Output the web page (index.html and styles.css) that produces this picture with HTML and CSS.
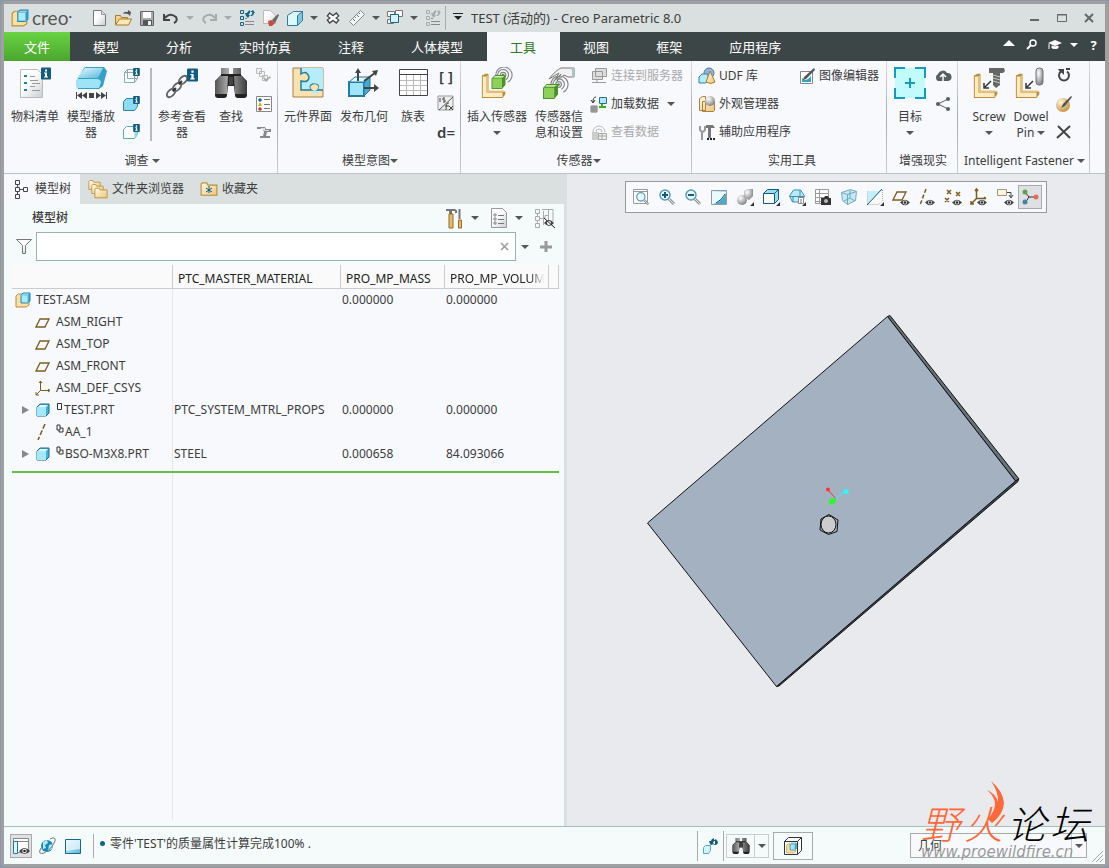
FILE: index.html
```
<!DOCTYPE html>
<html lang="zh-CN">
<head>
    <meta charset="utf-8">
    <title>TEST (活动的) - Creo Parametric 8.0</title>
    <link rel="stylesheet" href="styles.css">
</head>
<body>
<!-- 公用图标 -->
<svg class="defs" aria-hidden="true">
    <linearGradient id="gBlue" x1="0" y1="0" x2="1" y2="1"><stop offset="0" stop-color="#e9fbff"/><stop offset="1" stop-color="#55b8dc"/></linearGradient>
    <linearGradient id="gGrey" x1="0" y1="0" x2="1" y2="0"><stop offset="0" stop-color="#555"/><stop offset=".4" stop-color="#aaa"/><stop offset="1" stop-color="#3b3b3b"/></linearGradient>
    <linearGradient id="gPaper" x1="0" y1="0" x2="1" y2="1"><stop offset=".4" stop-color="#fff"/><stop offset="1" stop-color="#c9ced1"/></linearGradient>
    <linearGradient id="gTan" x1="0" y1="0" x2="1" y2="1"><stop offset="0" stop-color="#fffbe8"/><stop offset="1" stop-color="#eec47a"/></linearGradient>
    <radialGradient id="gBall" cx=".35" cy=".3" r=".8"><stop offset="0" stop-color="#fff6dc"/><stop offset="1" stop-color="#c08a32"/></radialGradient>
    <radialGradient id="gSteel" cx=".35" cy=".3" r=".8"><stop offset="0" stop-color="#fff"/><stop offset="1" stop-color="#777"/></radialGradient>

    <symbol id="i-info" viewBox="0 0 10 12"><rect width="10" height="12" rx="1" fill="#125c80"/><path d="M4 2h2v2H4zM3 5h3v4h1v1H3V9h1V6H3z" fill="#fff"/></symbol>
    <symbol id="i-asm" viewBox="0 0 16 16"><path d="M1 4l2-2h4v8h7v3l-3 2H1z" fill="#fbe0a5" stroke="#b98d3c"/><path d="M6 3l2-2h7v8l-2 2H6z" fill="#a8e9fb" stroke="#2287b0"/><path d="M13 3l2-2v8l-2 2z" fill="#2f94c4"/><path d="M6 3h7v8" fill="none" stroke="#67c1e2"/></symbol>
    <symbol id="i-part" viewBox="0 0 16 16"><path d="M2 5l3-3h9v9l-3 3H2z" fill="#3fb4e4" stroke="#1d6a8f"/><path d="M2 5h9v9H2z" fill="#a5e9ff"/><path d="M3 5l2-2h8l-2 2z" fill="#e4faff"/></symbol>
    <symbol id="i-plane" viewBox="0 0 16 12"><path d="M5 2h9l-4 8H1z" fill="none" stroke="#7d5c22" stroke-width="1.300"/></symbol>
    <symbol id="i-eye" viewBox="0 0 10 7"><path d="M0 3.500Q5-2 10 3.500Q5 9 0 3.500z" fill="#444"/><circle cx="5" cy="3.500" r="2" fill="#fff"/><circle cx="5" cy="3.500" r="1.200" fill="#222"/></symbol>
    <symbol id="i-L" viewBox="0 0 32 32"><path d="M2 8l4-2h3v19h18v3l-3 4H2z" fill="#b98d3c"/><path d="M3 9h4v17h17v5H3z" fill="#fdebc3"/><path d="M7 9l2-2v18l-2 1zM7 26l3-2h16l-2 2z" fill="#e7c079"/></symbol>
    <symbol id="i-waves" viewBox="0 0 20 20"><g fill="none" stroke="#888" stroke-width="1.300"><circle cx="9" cy="9" r="3"/><path d="M4 12A6 6 0 1 1 12 14M1 10A9 9 0 1 1 14 17"/></g><circle cx="9" cy="9" r="1.500" fill="#4a9a2f"/></symbol>
    <symbol id="i-green" viewBox="0 0 16 16"><path d="M0 4l4-4h12v11l-4 5H0z" fill="#4d8f2c"/><path d="M1 4h11v11H1z" fill="#8fd05a"/><path d="M2 3l2-2h11l-3 2z" fill="#c5eea0"/></symbol>
    <symbol id="i-binoc" viewBox="0 0 34 32"><path d="M7 1h8v6h4V1h8v7l6 6v14q0 3-3 3h-6q-3 0-3-3l-1-9h-6l-1 9q0 3-3 3H4q-3 0-3-3V14l6-6z" fill="#222"/><path d="M7 1h8v6H7zM19 1h8v6h-8zM6 9h8l-1 18H1V15zM20 9h8l5 6v12H21z" fill="url(#gGrey)"/><path d="M15 10h4v8h-4z" fill="#444"/></symbol>
    <symbol id="i-folder" viewBox="0 0 16 13"><path d="M1 3V2l1-1h4l1 2h8v9H1z" fill="url(#gTan)" stroke="#b98d3c"/></symbol>
    <symbol id="i-regen" viewBox="0 0 16 18"><g fill="none" stroke="currentColor" stroke-width="1"><path d="M1.500 1.500h3v3h-3zM1.500 7.500h3v3h-3zM1.500 13.500h3v3h-3z"/></g><path d="M6 9h2v1H6zM9 12h6v1H6v-1zM6 15h9v1H6z" fill="#888"/><path d="M7 7l-1-3h2q1-2 3-3v3q-2 1-1 2h1L9 9zM15 4h1L14 1 11 3h2q1 2-2 4h2q2-1 2-3z" fill="currentColor"/></symbol>
    <symbol id="i-loupe" viewBox="0 0 18 18"><path d="M11 11l5 5" stroke="#999" stroke-width="3"/><path d="M11 11l5 5" stroke="#ddd"/><circle cx="7" cy="7" r="5" fill="#e6f8fe" stroke="#5d9bb5" stroke-width="1.500"/></symbol>
    <symbol id="i-comp" viewBox="0 0 8 9"><path d="M1 1h3v5H1zM4 4h3v4H3V6" fill="none" stroke="#333"/></symbol>
</svg>

<div class="window">
    <header class="titlebar">
        <div class="brand">
            <svg width="18" height="18"><use href="#i-asm"/></svg><span>creo<sup>•</sup></span>
        </div>
        <div class="quick-access">
            <button aria-label="新建"><svg width="16" height="18"><path d="M2.500 1.500h8l4 4v11h-12z" fill="url(#gPaper)" stroke="#777"/><path d="M10.500 1.500v4h4" fill="#ddd" stroke="#999"/></svg></button>
            <button aria-label="打开"><svg width="18" height="18"><path d="M1.500 15.500v-9h5l1 2h6v2" fill="#f3d28d" stroke="#a37b33"/><path d="M1.500 16l4-6h12l-3 6z" fill="#ffe7b3" stroke="#a37b33"/><path d="M9 5q1-3 5-2V1l3 2-1 4-2-2q-3-1-5 0z" fill="#555"/></svg></button>
            <button aria-label="保存"><svg width="16" height="18"><path d="M1.500 2.500h13v14h-13z" fill="#aaa" stroke="#666"/><path d="M4 3h8v6H4z" fill="#fff"/><path d="M4 11h9v5H4z" fill="#555"/><path d="M9 12h3v4H9z" fill="#e5f5fb"/></svg></button>
            <button aria-label="撤消"><svg width="18" height="18"><path d="M3 9q5-6 11-1 2 4-2 6M2 5v6h6" fill="none" stroke="#444" stroke-width="2"/></svg></button>
            <button class="drop" aria-label="撤消列表"><i class="caret pale"></i></button>
            <button aria-label="重做"><svg width="18" height="18"><path d="M15 9q-5-6-11-1-2 4 2 6M16 5v6h-6" fill="none" stroke="#aaa" stroke-width="2"/></svg></button>
            <button class="drop" aria-label="重做列表"><i class="caret pale"></i></button>
            <button class="teal" aria-label="重新生成"><svg width="16" height="18"><use href="#i-regen"/></svg></button>
            <button aria-label="拭除"><svg width="18" height="18"><path d="M1.500 1.500h7l5 5v8h-12z" fill="url(#gPaper)" stroke="#bbb"/><path d="M6 12l4-1 3 3-3 3H7z" fill="#c94c3f"/><path d="M10 11l6-6 1 1-4 8z" fill="#666"/></svg></button>
            <button aria-label="窗口显示"><svg width="18" height="18"><path d="M1.500 6.500l6-4h9v9l-5 5h-10z" fill="#dff7ff" stroke="#2d7f9d"/><path d="M11.500 6.500l5-4v9l-5 5z" fill="#7cc6e0" stroke="#2d7f9d"/></svg></button>
            <button class="drop" aria-label="窗口选项"><i class="caret"></i></button>
            <button aria-label="关闭窗口"><svg width="14" height="14"><path d="M2 3l10 8M12 3L2 11" stroke="#444" stroke-width="5"/><path d="M3 4l8 6M11 4l-8 6" stroke="#fff" stroke-width="2.500"/></svg></button>
            <button aria-label="测量"><svg width="18" height="18"><path d="M1.500 12.500l11-11 4 4-11 11z" fill="#eef7fb" stroke="#888"/><path d="M5 10l2 2M7 8l1 1M9 6l2 2M11 4l1 1" stroke="#666"/></svg></button>
            <button class="drop" aria-label="测量选项"><i class="caret"></i></button>
            <button aria-label="窗口"><svg width="18" height="18"><path d="M1.500 2.500h7v5h-7zM1.500 10.500h6v4h-6zM9.500 1.500h7v6h-7z" fill="#fff" stroke="#777"/><path d="M4.500 5.500h8v8h-8z" fill="#d6f4fd" stroke="#16698c"/></svg></button>
            <button class="drop" aria-label="窗口列表"><i class="caret"></i></button>
            <button class="grey" aria-label="定制重新生成"><svg width="16" height="18"><use href="#i-regen"/></svg></button>
            <button class="customize" aria-label="自定义"><i class="caret dark"></i></button>
        </div>
        <h1>TEST (活动的) - Creo Parametric 8.0</h1>
        <div class="window-controls">
            <button aria-label="最小化"><svg width="12" height="12"><path d="M1 8h9" stroke="#666" stroke-width="2"/></svg></button>
            <button aria-label="最大化"><svg width="12" height="12"><path d="M1.500 2.500h9v7h-9zM1 3h10" fill="none" stroke="#666"/></svg></button>
            <button aria-label="关闭"><svg width="12" height="12"><path d="M2 2l8 8M10 2l-8 8" stroke="#666" stroke-width="2"/></svg></button>
        </div>
    </header>

    <nav class="tabs">
        <button class="file">文件</button>
        <button>模型</button>
        <button>分析</button>
        <button>实时仿真</button>
        <button>注释</button>
        <button>人体模型</button>
        <button class="active">工具</button>
        <button>视图</button>
        <button>框架</button>
        <button>应用程序</button>
        <div class="tab-tools">
            <button aria-label="最小化功能区"><svg width="12" height="12"><path d="M0 7l6-6 6 6z" fill="#fff"/></svg></button>
            <button aria-label="搜索"><svg width="12" height="12"><circle cx="7" cy="4" r="3" fill="none" stroke="#fff" stroke-width="1.500"/><path d="M5 6l-4 4" stroke="#fff" stroke-width="2"/></svg></button>
            <button aria-label="学习"><svg width="14" height="12"><path d="M0 4l7-3 7 3-7 3z" fill="#fff"/><path d="M4 7v2q3 1 6 0V7L7 8zM1 5v5" fill="#fff" stroke="#fff"/></svg></button>
            <button class="narrow" aria-label="学习选项"><i class="caret white"></i></button>
            <button class="help" aria-label="帮助">?</button>
        </div>
    </nav>

    <div class="ribbon">
        <section class="group g-investigate">
            <div class="tools">
                <button class="big"><svg width="32" height="32"><path d="M1.500 2.500h17l5 5v23h-22z" fill="url(#gPaper)" stroke="#bbb"/><path d="M5 8h3v2H5zM5 15h3v2H5zM5 22h3v2H5z" fill="#1583ac"/><path d="M11 9.500h5M11 13.500h8M13 16.500h8M11 19.500h5M13 23.500h8" stroke="#999"/><use href="#i-info" x="22" y="0" width="10" height="13"/></svg><span>物料清单</span></button>
                <button class="big"><svg width="32" height="32"><path d="M1 15L9 1q1-1 2-1h18l3 4-4 15-4 3H3z" fill="#37a0c8"/><path d="M1 14q0-2 2-2h20q3 1 3 3l-2 6H3q-2 0-2-3z" fill="#9fe3f8"/><path d="M2 11l8-10h18l-5 10z" fill="url(#gBlue)"/><path d="M1 25h1v7H1zM7 25v7l-5-3.500zM12 25v7l-5-3.500zM21 25v7l5-3.500zM26 25v7l5-3.500zM31 25h1v7h-1zM14 26h5v5h-5z" fill="#444"/></svg><span>模型播放器</span></button>
                <div class="stack">
                    <button aria-label="特征信息"><svg width="18" height="18"><path d="M2.500 5.500l3-3h10v9l-3 4h-10zM2.500 5.500h10v10M5.500 2.500v9h10" fill="#f7fcff" stroke="#8ba9b6"/><use href="#i-info" x="11" y="1" width="7" height="8"/></svg></button>
                    <button aria-label="模型信息"><svg width="18" height="18"><path d="M1.500 6.500l3-3h11v8l-3 4h-11z" fill="#8edbf4" stroke="#2a86a9"/><use href="#i-info" x="11" y="1" width="7" height="8"/></svg></button>
                    <button aria-label="元件信息"><svg width="18" height="18"><path d="M1.500 6.500l3-3h11v8l-3 4h-11z" fill="#fff" stroke="#58abc9"/><path d="M12.500 6.500l3-2v7l-3 4z" fill="#8edbf4"/><use href="#i-info" x="11" y="1" width="7" height="8"/></svg></button>
                </div>
                <div class="divider"></div>
                <button class="big"><svg width="34" height="32"><g fill="none" stroke="#666" stroke-width="2"><ellipse cx="6" cy="26" rx="5" ry="3" transform="rotate(-45 6 26)"/><ellipse cx="12" cy="20" rx="5" ry="3" transform="rotate(-45 12 20)"/><ellipse cx="18" cy="13" rx="5" ry="3" transform="rotate(-45 18 13)"/></g><path d="M8 24l3-3M14 17l3-3" stroke="#333" stroke-width="2"/><use href="#i-info" x="22" y="1" width="11" height="14"/></svg><span>参考查看器</span></button>
                <button class="big find"><svg width="34" height="32"><use href="#i-binoc"/></svg><span>查找</span></button>
                <div class="stack">
                    <button aria-label="选择"><svg width="18" height="18"><path d="M1.500 1.500h5v5h-5zM4.500 4.500h5v5h-5zM7.500 8.500h5v5h-5z" fill="#f4f4f4" stroke="#bbb"/><path d="M8 11l3 4 5-5-1-1-4 3-2-2z" fill="#aaa"/></svg></button>
                    <button aria-label="消息日志"><svg width="18" height="18"><path d="M1.500 1.500h15v15h-15z" fill="#fff" stroke="#888"/><circle cx="5" cy="5" r="1.800" fill="#166c91"/><path d="M3 11l2-4 2 4z" fill="#e8a91c"/><circle cx="5" cy="14" r="1.800" fill="#c6392b"/><path d="M9 4.500h6M9 9.500h6M9 13.500h6" stroke="#777"/></svg></button>
                    <button aria-label="进程"><svg width="18" height="18"><path d="M2 4h8l1 2h5v3h-4l-1 4h4v2H5v-2h3l1-4-1-3H2z" fill="#888"/><path d="M5 5h5v2h4v1h-4z" fill="#ddd"/></svg></button>
                </div>
            </div>
            <h2>调查 <i class="caret"></i></h2>
        </section>

        <section class="group g-intent">
            <div class="tools">
                <button class="big"><svg width="32" height="32"><path d="M1 1h30v29H1z" fill="#fae2af" stroke="#a68145"/><path d="M9 1h22v22h-5q2 3-2 4-5 0-3-4H9z" fill="#b5edfc"/><path d="M9 8q1-3 5-3 3 2 3 5t-3 5q-4 0-5-3z" fill="#fae2af"/><path d="M9 1v6q6-4 8 3 0 6-8 4v9h11q-4-4 1-6 8 0 4 6h6" fill="#fae2af" fill-opacity="0" stroke="#247b9e" stroke-width="1.500"/><path d="M20 23q-4-4 2-6 7 1 3 6z" fill="#fae2af"/></svg><span>元件界面</span></button>
                <button class="big"><svg width="34" height="32"><path d="M2 15h15v14H2z" fill="#9fe5fb" stroke="#247b9e" stroke-width="2"/><path d="M2 15l6-5h15l-6 5z" fill="#e3f9ff" stroke="#247b9e"/><path d="M17 15l6-5v13l-6 6z" fill="#42a9d0" stroke="#247b9e"/><path d="M11 14V3M17 14l11-8M17 21h13" stroke="#444" stroke-width="2"/><path d="M8 6l3-5 3 5zM25 4l6-1-2 6zM27 17l5 4-5 4z" fill="#444"/></svg><span>发布几何</span></button>
                <button class="big find"><svg width="32" height="32"><path d="M2.500 2.500h28v26h-28z" fill="#fff"/><path d="M9.500 8v20M16.500 8v20M23.500 8v20M2 13.500h28M2 18.500h28M2 23.500h28" stroke="#bbb"/><path d="M2.500 2.500h28v26h-28zM2 7.500h28" fill="none" stroke="#444"/></svg><span>族表</span></button>
                <div class="stack">
                    <button class="sym">[ ]</button>
                    <button aria-label="参数"><svg width="18" height="18"><path d="M1 1h15v14H1z" fill="#eee" stroke="#999"/><path d="M2 15L16 2" stroke="#555"/><path d="M3 3v4M8 3H6v2h2v2H6M12 8q-3-1-3 7M8 11h4M12 11l4 4M16 11l-4 4" fill="none" stroke="#444"/></svg></button>
                    <button class="sym">d=</button>
                </div>
            </div>
            <h2>模型意图<i class="caret"></i></h2>
        </section>

        <section class="group g-sensor">
            <div class="tools">
                <button class="big wide"><svg width="34" height="32"><use href="#i-L" width="30" height="32"/><use href="#i-waves" x="15" y="0" width="18" height="18"/><use href="#i-green" x="11" y="8" width="15" height="14"/></svg><span>插入传感器</span><i class="caret"></i></button>
                <button class="big wide"><svg width="34" height="32"><path d="M7 12Q14 3 19 1h13v9h-6l-4-2-7 6 4-7-6 6 4-7z" fill="#f2f2f2" stroke="#777"/><path d="M27 1h5v10h-2V3z" fill="#a9c3cf"/><use href="#i-waves" x="8" y="9" width="19" height="19"/><use href="#i-green" x="1" y="17" width="15" height="15"/></svg><span>传感器信息和设置</span></button>
                <div class="stack">
                    <button class="row" disabled><svg width="18" height="18"><path d="M5.500 1.500h11v8h-11zM2.500 4.500h10v8h-10zM2 15.500h14M7 13v2" fill="#ddd" stroke="#999"/></svg>连接到服务器</button>
                    <button class="row"><svg width="18" height="18"><path d="M9.500 2.500h7v6h-7z" fill="#abe9fc" stroke="#28718e"/><path d="M1 11h6v6H1zM1 13h6M1 15h6M3 11v6M5 11v6" fill="none" stroke="#777"/><path d="M6 2Q3 2 3 7M1 5l2 3 2-3" fill="none" stroke="#333"/><path d="M9 12h7M12 9v2" stroke="#3bb01b" stroke-width="2"/></svg>加载数据 <i class="caret"></i></button>
                    <button class="row" disabled><svg width="18" height="18"><path d="M3 9a6 6 0 0 1 12 0M6 9a3 3 0 0 1 6 0" fill="none" stroke="#bbb"/><path d="M2 9h7v8H2z" fill="#ccc"/><path d="M8.500 10.500h8v6h-8zM9 13h8M12 11v6" fill="#eee" stroke="#aaa"/></svg>查看数据</button>
                </div>
            </div>
            <h2>传感器<i class="caret"></i></h2>
        </section>

        <section class="group g-utility">
            <div class="tools">
                <div class="stack first">
                    <button class="row"><svg width="18" height="18"><circle cx="11" cy="6" r="5" fill="#90b5e3" stroke="#5278a8"/><path d="M1 10l3-3h6v7l-2 2H1z" fill="#b8ebf9" stroke="#3184a2"/><path d="M12 4l5 11q-4 3-9 0z" fill="url(#gTan)" stroke="#a97a2c"/></svg>UDF 库</button>
                    <button class="row"><svg width="18" height="18"><path d="M1.500 3.500l3-2h3v14h-6zM4.500 6.500h12v9l-1 1h-11z" fill="url(#gTan)" stroke="#a98144"/><circle cx="12" cy="6" r="5" fill="url(#gSteel)"/></svg>外观管理器</button>
                    <button class="row"><svg width="18" height="18"><path d="M2 3v4l2 2v8M7 3v4L5 9" fill="none" stroke="#999" stroke-width="2"/><path d="M8 2h7l2 3h-4v10h-3V5H8z" fill="#777"/><path d="M9 16h8" stroke="#222" stroke-width="2" stroke-dasharray="2 1"/></svg>辅助应用程序</button>
                </div>
                <div class="stack">
                    <button class="row"><svg width="18" height="18"><path d="M2.500 4.500h12v12h-12z" fill="#fff" stroke="#888"/><path d="M4 11l3 2 3-1 3-3v6H4z" fill="#3aa2c6"/><path d="M6 10l10-9 1 2-9 9-3 1z" fill="#555"/></svg>图像编辑器</button>
                </div>
            </div>
            <h2>实用工具</h2>
        </section>

        <section class="group g-ar">
            <div class="tools">
                <button class="big find"><svg width="32" height="32"><path d="M1 1h30v30H1z" fill="#c3fbfc"/><path d="M1 11V1h10M21 1h10v10M31 21v10H21M11 31H1V21" fill="none" stroke="#159bc0" stroke-width="2"/><path d="M16 11v10M11 16h10" stroke="#159bc0" stroke-width="2"/></svg><span>目标</span><i class="caret"></i></button>
                <div class="stack">
                    <button aria-label="发布"><svg width="18" height="18"><path d="M4 14a4 4 0 0 1 0-7 5 5 0 0 1 9-1 4 4 0 0 1 1 8z" fill="#555e60"/><path d="M9 14V8M6 10l3-3 3 3" fill="none" stroke="#fff" stroke-width="1.500"/></svg></button>
                    <button aria-label="共享"><svg width="18" height="18"><path d="M14 4L4 9l10 5" fill="none" stroke="#555e60"/><circle cx="4" cy="9" r="2" fill="#555e60"/><circle cx="14" cy="4" r="2" fill="#555e60"/><circle cx="14" cy="14" r="2" fill="#555e60"/></svg></button>
                </div>
            </div>
            <h2>增强现实</h2>
        </section>

        <section class="group g-fastener">
            <div class="tools">
                <button class="big find"><svg width="34" height="32"><use href="#i-L" width="30" height="32"/><path d="M17 1h15l1 3-2 2h-3v12l-4 3-3-3V6h-4z" fill="#666"/><path d="M21 8l7 2M21 11l7 2M21 14l7 2" stroke="#ccc"/><path d="M19 14l-6 6M12 16v5h5" fill="none" stroke="#333" stroke-width="1.500"/></svg><span>Screw</span><i class="caret"></i></button>
                <button class="big find"><svg width="34" height="32"><use href="#i-L" width="30" height="32"/><rect x="22" y="1" width="7" height="17" rx="3" fill="url(#gSteel)" stroke="#777"/><path d="M19 14l-6 6M12 16v5h5" fill="none" stroke="#333" stroke-width="1.500"/></svg><span>Dowel Pin <i class="caret"></i></span></button>
                <div class="stack">
                    <button aria-label="重新装配"><svg width="18" height="18"><path d="M6 4.500a5 5 0 1 0 6 0" fill="none" stroke="#444" stroke-width="2"/><path d="M3 2h6v6L7 6 5 5z" fill="#444"/><path d="M11 2h4" stroke="#444" stroke-width="2"/></svg></button>
                    <button aria-label="编辑"><svg width="18" height="18"><circle cx="8" cy="10" r="7" fill="url(#gBall)"/><path d="M8 9l8-8 1 1-7 9-4 2z" fill="#555"/></svg></button>
                    <button aria-label="删除"><svg width="18" height="18"><path d="M3 3l12 12M15 3L2 15" fill="none" stroke="#444" stroke-width="2"/></svg></button>
                </div>
            </div>
            <h2>Intelligent Fastener <i class="caret"></i></h2>
        </section>
    </div>

    <main>
        <aside class="navigator">
            <div class="nav-tabs">
                <button class="active"><svg width="16" height="20"><path d="M1.500 1.500h4v4h-4zM1.500 8.500h4v4h-4zM1.500 15.500h4v4h-4zM9.500 8.500h4v4h-4zM3.500 6v2M3.500 13v2M6 10.500h3" fill="none" stroke="#444"/></svg>模型树</button>
                <button><svg width="20" height="20"><use href="#i-folder" x="0" y="0" width="13" height="12"/><use href="#i-folder" x="3" y="4" width="13" height="12"/><use href="#i-folder" x="6" y="8" width="14" height="12"/></svg>文件夹浏览器</button>
                <button><svg width="18" height="18"><use href="#i-folder" y="1" width="18" height="16"/><path d="M9 6v7M6 8l6 4M12 8l-6 4" stroke="#125c80"/></svg>收藏夹</button>
            </div>
            <div class="tree-header">
                <h3>模型树</h3>
                <button aria-label="设置"><svg width="20" height="22"><path d="M2 2h9q3 1 2 4h-2V4H8v3H5V4H2z" fill="#777"/><path d="M5 7h4v14H5z" fill="#e5bb70" stroke="#946b27"/><path d="M15.500 2v10" stroke="#777" stroke-width="2"/><path d="M14.500 13h3v8h-3z" fill="#e5bb70" stroke="#946b27"/></svg></button>
                <button class="drop" aria-label="设置选项"><i class="caret"></i></button>
                <button aria-label="显示"><svg width="18" height="22"><path d="M1.500 1.500h11l4 4v15h-15z" fill="url(#gPaper)" stroke="#999"/><path d="M4 7h2v2H4zM4 11h2v2H4zM4 15h2v2H4z" fill="none" stroke="#888"/><path d="M8 8.500h6M8 12.500h6M8 16.500h6" stroke="#777"/></svg></button>
                <button class="drop" aria-label="显示选项"><i class="caret"></i></button>
                <button aria-label="隐藏列"><svg width="22" height="22"><path d="M1.500 2.500h4v4h-4zM1.500 9.500h4v4h-4zM1.500 16.500h4v4h-4zM3.500 7v2M3.500 14v2M6 11.500h5v-3h4M8 2.500h11v12M14.500 3v15M9.500 4v14" fill="none" stroke="#aaa"/><path d="M10 16q5-6 10 0-5 6-10 0z" fill="#444"/><circle cx="15" cy="16" r="2" fill="#fff"/><path d="M10 11l11 10" stroke="#222"/></svg></button>
            </div>
            <div class="filter-row">
                <label for="treeFilter" aria-label="过滤"><svg width="18" height="18"><path d="M1.500 1.500h15l-6 6v8h-3v-8z" fill="url(#gPaper)" stroke="#777"/></svg></label>
                <div class="filter-box">
                    <input id="treeFilter" type="text">
                    <button aria-label="清除"><svg width="10" height="10"><path d="M1 1l7 7M8 1L1 8" stroke="#999" stroke-width="1.500"/></svg></button>
                </div>
                <button class="drop" aria-label="过滤选项"><i class="caret"></i></button>
                <button class="add" aria-label="添加"><svg width="12" height="12"><path d="M6 0v11M0 6h12" stroke="#999" stroke-width="3"/></svg></button>
            </div>
            <div class="tree">
                <table>
                    <colgroup><col class="c-name"><col class="c-mat"><col class="c-num"><col class="c-num"><col></colgroup>
                    <thead>
                        <tr><th></th><th>PTC_MASTER_MATERIAL</th><th>PRO_MP_MASS</th><th><span class="fade">PRO_MP_VOLUME</span></th><th></th></tr>
                    </thead>
                    <tbody>
                        <tr><td class="root"><svg width="16" height="16"><use href="#i-asm"/></svg>TEST.ASM</td><td></td><td>0.000000</td><td>0.000000</td><td></td></tr>
                        <tr><td><svg width="16" height="12"><use href="#i-plane"/></svg>ASM_RIGHT</td><td></td><td></td><td></td><td></td></tr>
                        <tr><td><svg width="16" height="12"><use href="#i-plane"/></svg>ASM_TOP</td><td></td><td></td><td></td><td></td></tr>
                        <tr><td><svg width="16" height="12"><use href="#i-plane"/></svg>ASM_FRONT</td><td></td><td></td><td></td><td></td></tr>
                        <tr><td><svg width="16" height="16"><path d="M5.500 1v9.500H15M5.500 10.500L1 15M4 3l1.500-2L7 3M13 9l2 1.500-2 1.500M1 12v3h3" fill="none" stroke="#7d5c22"/></svg>ASM_DEF_CSYS</td><td></td><td></td><td></td><td></td></tr>
                        <tr><td class="expandable"><i class="expander"></i><svg width="16" height="16"><use href="#i-part"/></svg><svg class="mark" width="7" height="9"><path d="M1.500 1.500h4v6h-4z" fill="none" stroke="#333"/></svg>TEST.PRT</td><td>PTC_SYSTEM_MTRL_PROPS</td><td>0.000000</td><td>0.000000</td><td></td></tr>
                        <tr><td><svg width="16" height="16"><path d="M10 0L3 16" stroke="#7d5c22" stroke-width="1.500" stroke-dasharray="5 2"/></svg><svg class="mark" width="8" height="9"><use href="#i-comp"/></svg>AA_1</td><td></td><td></td><td></td><td></td></tr>
                        <tr><td class="expandable"><i class="expander"></i><svg width="16" height="16"><use href="#i-part"/></svg><svg class="mark" width="8" height="9"><use href="#i-comp"/></svg>BSO-M3X8.PRT</td><td>STEEL</td><td>0.000658</td><td>84.093066</td><td></td></tr>
                    </tbody>
                </table>
                <div class="insert-here"></div>
            </div>
        </aside>

        <div class="graphics">
            <!-- 三维模型 -->
            <svg class="model" viewBox="0 0 538 652">
                <g stroke="#111" stroke-linejoin="round">
                    <path d="M320.500 142.500l2.500-1 129 163.500-3.500 2z" fill="#67727b"/>
                    <path d="M209.500 512.500l239-205.500 3-2-.5 2.500L212 512z" fill="#424b58"/>
                    <path d="M80.500 349l240-206.500 128 164.500-239 205.500z" fill="#a4b1c1"/>
                </g>
                <path d="M262 340.500l9 5.500-1 11.500-8.500 3-8.500-4.500 1-11z" fill="#a4b1c1" stroke="#111"/>
                <ellipse cx="261.500" cy="350.500" rx="7.500" ry="8.500" fill="#ccc" stroke="#111"/>
                <path d="M262 317l7 8" stroke="#f33"/><path d="M269 325l-4 2" stroke="#2f2" stroke-width="2"/><path d="M269 325l8-7" stroke="#2ff"/>
                <circle cx="261" cy="315.500" r="2" fill="#f33"/><circle cx="265" cy="327.500" r="3" fill="#2f2"/><circle cx="279" cy="317.500" r="2.500" fill="#2ff"/>
            </svg>
            <div class="view-toolbar">
                <button aria-label="重新调整"><svg width="18" height="18"><path d="M1.500 1.500h14v14h-14zM2 3.500h13" fill="#fff" stroke="#999"/><use href="#i-loupe" x="3" y="3" width="15" height="15"/></svg></button>
                <button aria-label="放大"><svg width="18" height="18"><use href="#i-loupe"/><path d="M4 7h6M7 4v6" stroke="#125c80" stroke-width="2"/></svg></button>
                <button aria-label="缩小"><svg width="18" height="18"><use href="#i-loupe"/><path d="M4 7h6" stroke="#125c80" stroke-width="2"/></svg></button>
                <button aria-label="重画"><svg width="18" height="18"><path d="M1.500 2.500h15v14h-15z" fill="url(#gBlue)" stroke="#999"/><path d="M2 4h14v2q-5 8-14 10z" fill="#e9fbff"/><path d="M16 5q-3 8-11 11h11z" fill="#4aa9cb"/><path d="M15 6q-3 6-9 9" fill="none" stroke="#125c80"/></svg></button>
                <button aria-label="渲染选项"><svg width="18" height="18"><circle cx="6" cy="12" r="5" fill="url(#gSteel)"/><path d="M8 3l3-2h6v7l-4 4-5-3z" fill="url(#gSteel)"/><path d="M18 14v4h-4z" fill="#333"/></svg></button>
                <button aria-label="显示样式"><svg width="18" height="18"><path d="M1.500 5.500l4-4h11v10l-4 4h-11z" fill="#9bdcf2" stroke="#125c80"/><path d="M1.500 5.500h11v10h-11zM12.500 5.500l4-4" fill="#fff" stroke="#125c80"/><path d="M18 14v4h-4z" fill="#333"/></svg></button>
                <button aria-label="已保存方向"><svg width="18" height="18"><path d="M1.500 8l4-6h7l4 6-3 6h-9zM2 8.500h14M5 14V9M12 2v6" fill="#bdeafa" stroke="#3b91b3"/><path d="M10.500 9.500h5v6h-5z" fill="#fff" stroke="#888"/><path d="M12 12h2M12 14h2" stroke="#777"/><path d="M18 14v4h-4z" fill="#333"/></svg></button>
                <button aria-label="视图管理器"><svg width="18" height="18"><path d="M1.500 1.500h13v14h-13zM2 5.500h12M2 9.500h12M2 13.500h12M5.500 2v13" fill="#fff" stroke="#999"/><path d="M7 10h3l1-2h3l1 2h2v7H7z" fill="#333"/><circle cx="12" cy="13" r="2" fill="#bbb"/></svg></button>
                <button aria-label="透视图"><svg width="18" height="18"><path d="M1.500 4.500l9-3 6 2-1 9-8 4-5-4z" fill="#c5eaf6" stroke="#7eaabc"/><path d="M1.500 4.500l6 2 9-3M7.500 6.500v10M4 13l6-3 5 3M10 2v8" fill="none" stroke="#6ba9c1"/></svg></button>
                <button aria-label="剖面"><svg width="18" height="18"><path d="M1.500 3.500h11l4-2v11l-4 4h-11z" fill="#fafafa" stroke="#aaa" stroke-dasharray="1 1"/><path d="M2 3h13L2 15z" fill="#c7effb"/><path d="M1 17L16 1" stroke="#125c80"/><path d="M18 14v4h-4z" fill="#333"/></svg></button>
                <button aria-label="平面显示"><svg width="18" height="18"><use href="#i-plane" x="0" y="2" width="16" height="12"/><use href="#i-eye" x="8" y="11" width="10" height="7"/></svg></button>
                <button aria-label="轴显示"><svg width="18" height="18"><path d="M8 1L2 17" stroke="#7d5c22" stroke-width="1.500" stroke-dasharray="4 2"/><use href="#i-eye" x="7" y="11" width="10" height="7"/></svg></button>
                <button aria-label="点显示"><svg width="18" height="18"><path d="M3 2l4 4M7 2L3 6M12 4l4 4M16 4l-4 4M1 10l4 4M5 10l-4 4" stroke="#7d5c22" stroke-width="1.500"/><use href="#i-eye" x="8" y="11" width="10" height="7"/></svg></button>
                <button aria-label="坐标系显示"><svg width="18" height="18"><path d="M6.500 1v9.500H16M6.500 10.500L1 16M5 3l1.500-2L8 3M14 9l2 1.500M1 13v3h3" fill="none" stroke="#7d5c22" stroke-width="1.500"/><use href="#i-eye" x="7" y="11" width="10" height="7"/></svg></button>
                <button aria-label="注释显示"><svg width="18" height="18"><path d="M1.500 1.500h9v6h-9z" fill="#fff7dc" stroke="#998"/><path d="M11 4.500h4V9M13 7l2 3 2-3" fill="none" stroke="#444"/><use href="#i-eye" x="8" y="11" width="10" height="7"/></svg></button>
                <button class="pressed" aria-label="旋转中心"><svg width="18" height="18"><path d="M4 4l4 5-4 6M8 9h7" fill="none" stroke="#333"/><circle cx="4" cy="4" r="2.500" fill="#5da04f"/><circle cx="4" cy="14" r="2.500" fill="#4284a4"/><circle cx="15" cy="9" r="2.500" fill="#e56b60"/></svg></button>
            </div>
        </div>
    </main>

    <footer class="statusbar">
        <div class="status-left">
            <button class="pressed" aria-label="导航器"><svg width="18" height="18"><path d="M1.500 1.500h15v14h-15zM2 4.500h14" fill="#fff" stroke="#888"/><path d="M1.500 4.500h4v12h-4z" fill="#dff6fd" stroke="#1f7b9e"/><use href="#i-eye" x="7" y="10" width="11" height="8"/></svg></button>
            <button aria-label="浏览器"><svg width="18" height="18"><circle cx="9" cy="9" r="6" fill="#168ac0"/><path d="M5 5l4-2 1 3-3 2 1 3-3 1zM11 8l4-1-1 5-4 2z" fill="#b9e9f8"/><path d="M3 11Q-1 18 6 16 14 12 17 4 18-1 12 2" fill="none" stroke="#777"/></svg></button>
            <button aria-label="全屏"><svg width="18" height="18"><path d="M1.500 2.500h15v14h-15z" fill="url(#gBlue)" stroke="#16698c"/><path d="M2 3h14v9L2 14z" fill="#eefaff" opacity=".7"/></svg></button>
        </div>
        <p class="message"><i class="dot"></i>零件'TEST'的质量属性计算完成100% .</p>
        <div class="status-tools">
            <button class="teal regen" aria-label="重新生成状态"><svg width="18" height="18"><path d="M1.500 10.500l2-2h5v5l-2 3h-5z" fill="#d4f4fe" stroke="#4eaccb"/><path d="M8 7L7 4h2q0-2 3-3v3l-1 2 1 1-3 1zM16 5l-2-3-3 2h2v3l-2 1h3q2-1 2-3z" fill="#125c80"/></svg></button>
            <div class="split"><button aria-label="查找"><svg width="18" height="18"><use href="#i-binoc"/></svg></button><button class="arrow" aria-label="查找选项"><i class="caret"></i></button></div>
            <button class="box" aria-label="选择框"><svg width="20" height="20"><path d="M1.500 5.500l4-4h13v13l-4 4h-13zM1.500 5.500h13v13M14.500 5.500l4-4" fill="#fff" stroke="#333"/><use href="#i-asm" x="3" y="6" width="11" height="12"/></svg></button>
        </div>
        <div class="filter-select">
            <select aria-label="选择过滤器"><option>几何</option></select>
            <i class="caret"></i>
        </div>
    </footer>

    <!-- 论坛水印 -->
    <div class="watermark">
        <div class="forum"><b>野</b><b>火</b><span>论</span><span>坛</span></div>
        <div class="site">www.proewildfire.cn</div>
        <svg width="18" height="44" viewBox="0 0 18 44"><path d="M4 1Q16 11 17 23 16 35 5 43L1 39Q8 31 8 24 8 17 0 10 9 14 11 22 12 13 4 1z" fill="#ff6838"/></svg>
    </div>
    <svg class="grip" width="12" height="12"><path d="M1 12L12 1M5 12l7-7M9 12l3-3" stroke="#aaa"/></svg>
</div>
</body>
</html>
```
FILE: styles.css
```
* {
    box-sizing: border-box;
}
html {
    height: 100%;
    background: #7a7a70;
}
body {
    height: 100%;
    margin: 0;
    padding: 1px 0 1px 1px;
    background: #8b97ab;
    font: 12px/16px "Noto Sans", "Noto Sans CJK SC", sans-serif;
    color: #3c3c3c;
}
button, input, select {
    font: inherit;
    color: inherit;
}
button {
    display: flex;
    align-items: center;
    justify-content: center;
    padding: 0;
    border: 0;
    background: none;
}
svg {
    flex: none;
}
h1, h2, h3, p {
    margin: 0;
    font: inherit;
}
.defs {
    position: absolute;
    width: 0;
    height: 0;
}
.window {
    position: relative;
    display: flex;
    flex-direction: column;
    height: 100%;
    border: 3px solid #a0a0a0;
    border-right-width: 4px;
    border-radius: 5px;
    background: #f7f9fc;
}

/* 小三角 */
.caret {
    display: inline-block;
    border: 4px solid transparent;
    border-top-color: #555;
    border-bottom: 0;
    vertical-align: 2px;
}
.caret.pale {
    border-top-color: #aaa;
}
.caret.white {
    border-top-color: #fff;
}
.caret.dark {
    border-top-color: #222;
}

/* 标题栏 */
.titlebar {
    display: flex;
    align-items: center;
    height: 28px;
    background: #dae0df;
}
.brand {
    display: flex;
    align-items: center;
    width: 83px;
    padding-left: 7px;
    gap: 3px;
    font-family: "Lato", sans-serif;
    font-size: 19px;
    color: #555;
}
.brand sup {
    font-size: 6px;
    line-height: 0;
    vertical-align: 6px;
}
.quick-access {
    display: flex;
    align-items: center;
}
.quick-access button {
    width: 24px;
    height: 24px;
}
.quick-access .drop {
    width: 14px;
}
.quick-access .customize {
    border-left: 1px solid #aaa;
}
.customize .caret {
    position: relative;
}
.customize .caret::before {
    content: "";
    position: absolute;
    left: -5px;
    top: -7px;
    width: 10px;
    height: 1px;
    background: #222;
}
.teal {
    color: #12658a;
}
.grey {
    color: #aaa;
}
.titlebar h1 {
    margin-left: 2px;
    font-size: 13px;
}
.window-controls {
    display: flex;
    margin-left: auto;
    padding-right: 3px;
}
.window-controls button {
    width: 27px;
    height: 24px;
}

/* 选项卡 */
.tabs {
    display: flex;
    height: 29px;
    background: #3d4647;
    color: #fff;
    font-size: 13px;
}
.tabs > button {
    padding: 0 24px 0 23px;
}
.tabs .file {
    padding: 0 20px;
    background: linear-gradient(#68d442, #4ba52f);
}
.tabs .active {
    background: #f7f9fc;
    color: #33761c;
}
.tab-tools {
    display: flex;
    align-items: center;
    margin-left: auto;
    padding-bottom: 4px;
}
.tab-tools button {
    width: 23px;
}
.tab-tools .narrow {
    width: 16px;
}
.tab-tools .help {
    font-weight: bold;
}

/* 功能区 */
.ribbon {
    display: flex;
    height: 113px;
    border-bottom: 1px solid #b9c4c4;
}
.group {
    display: flex;
    flex-direction: column;
    padding-left: 2px;
    border-right: 1px solid;
    border-image: linear-gradient(#ddd, #aaa, #ccc) 1;
}
.group h2 {
    text-align: center;
    line-height: 25px;
}
.tools {
    display: flex;
    height: 87px;
    padding-top: 1px;
}
.g-investigate {
    width: 274px;
    padding-left: 3px;
}
.g-intent {
    width: 183px;
}
.g-sensor {
    width: 231px;
    padding-left: 5px;
}
.g-utility {
    width: 195px;
    padding-left: 6px;
}
.g-ar {
    width: 71px;
}
.g-fastener {
    width: 132px;
}
.g-fastener .tools {
    padding-left: 8px;
}
.big {
    flex-direction: column;
    justify-content: flex-start;
    width: 56px;
    padding-top: 5px;
}
.big > span {
    max-width: 48px;
    margin-top: 10px;
    text-align: center;
}
.big > .caret {
    margin-top: 6px;
}
.wide {
    width: 62px;
}
.wide > span {
    max-width: 60px;
}
.wide:nth-child(2) > span {
    max-width: 48px;
}
.find {
    width: 42px;
}
.divider {
    width: 2px;
    height: 73px;
    margin: 6px 2px 0 7px;
    background: #b5b9bb;
}
.stack button {
    min-width: 24px;
    height: 28px;
}
.stack .row {
    gap: 3px;
}
.stack .row .caret {
    margin-left: 5px;
}
.stack.first {
    width: 100px;
}
.row:disabled {
    color: #aaa;
}
.sym {
    font-size: 15px;
    font-weight: 600;
}

/* 导航器 */
main {
    display: flex;
    flex: 1;
    min-height: 0;
}
.navigator {
    display: flex;
    flex-direction: column;
    flex: 0 0 563px;
    border-right: 3px solid #dae0df;
    background: #f5fafb;
}
.nav-tabs {
    display: flex;
    height: 30px;
    background: #dae0df;
}
.nav-tabs button {
    gap: 4px;
    padding: 0 8px;
}
.nav-tabs .active {
    gap: 5px;
    padding: 0 9px 0 10px;
    background: #f7f9fc;
}
.tree-header {
    display: flex;
    align-items: center;
    height: 28px;
    padding: 0 8px 0 28px;
}
.tree-header h3 {
    flex: 1;
    font-weight: 500;
}
.drop {
    width: 22px;
}
.tree-header .drop {
    margin-right: 4px;
}
.filter-row {
    display: flex;
    height: 29px;
    padding: 0 6px 0 11px;
}
.filter-row label {
    display: flex;
    align-items: center;
    width: 21px;
}
.filter-box {
    display: flex;
    flex: 1;
    border: 1px solid #9fb0b0;
    background: #fff;
}
.filter-box input {
    flex: 1;
    min-width: 0;
    border: 0;
    background: none;
    outline: 0;
}
.filter-box button {
    width: 20px;
}
.filter-row .drop {
    width: 18px;
}
.add {
    width: 24px;
}
.tree {
    flex: 1;
    margin: 4px 5px 6px 8px;
    background: linear-gradient(#e6e8ea, #e6e8ea) 160px 0 / 1px 100% no-repeat #f7f9fc;
}
.tree table {
    width: 100%;
    border-collapse: separate;
    border-spacing: 0;
    table-layout: fixed;
}
.c-name {
    width: 161px;
}
.c-mat {
    width: 168px;
}
.c-num {
    width: 104px;
}
th, td {
    padding: 0;
    text-align: left;
    font-weight: normal;
    white-space: nowrap;
    overflow: hidden;
}
th {
    height: 24px;
    padding: 4px 0 0 5px;
    border-right: 1px solid #ccc;
    border-bottom: 1px solid #ccc;
    background: #fafafa;
    color: #222;
}
.fade {
    display: block;
    margin-right: 4px;
    overflow: hidden;
    -webkit-mask-image: linear-gradient(90deg, #000 85%, transparent);
}
td {
    height: 22px;
    padding-left: 1px;
}
td:first-child {
    padding-left: 23px;
}
td.root:first-child {
    padding-left: 3px;
}
td.expandable:first-child {
    padding-left: 10px;
}
td svg {
    margin-right: 5px;
    vertical-align: middle;
}
td .mark {
    margin-right: 1px;
    vertical-align: 3px;
}
.expander {
    display: inline-block;
    margin-right: 6px;
    border: 4px solid transparent;
    border-left: 7px solid #888;
    border-right: 0;
}
.insert-here {
    height: 2px;
    margin-top: 6px;
    background: #61c142;
}

/* 图形窗口 */
.graphics {
    position: relative;
    display: flex;
    justify-content: center;
    align-items: flex-start;
    flex: 1;
    padding-top: 7px;
    background: #e8eaee;
}
.model {
    position: absolute;
    inset: 0;
    width: 100%;
    height: 100%;
}
.view-toolbar {
    position: relative;
    display: flex;
    align-items: center;
    height: 32px;
    padding: 0 4px 0 2px;
    border: 1px solid #999;
    background: #f7f9fc;
}
.view-toolbar button {
    width: 26px;
    height: 26px;
}
.pressed {
    border: 1px solid #aaa;
    background: #dfe0e4;
}
.view-toolbar .pressed {
    width: 24px;
    height: 24px;
}

/* 状态栏 */
.statusbar {
    display: flex;
    align-items: center;
    height: 38px;
    border-top: 1px solid #a9bcbc;
    background: #f5fafb;
}
.status-left {
    display: flex;
    align-items: center;
    gap: 4px;
    height: 24px;
    padding: 0 9px 0 6px;
    border-right: 1px solid #aaa;
}
.status-left button {
    width: 22px;
    height: 24px;
}
.message {
    display: flex;
    align-items: center;
    flex: 1;
    gap: 5px;
    padding: 0 0 4px 6px;
}
.dot {
    width: 5px;
    height: 5px;
    border-radius: 50%;
    background: #12658a;
}
.status-tools {
    display: flex;
    align-items: center;
    margin-right: 97px;
}
.regen {
    width: 27px;
    height: 30px;
    border: solid #aaa;
    border-width: 0 1px;
}
.split {
    display: flex;
    height: 24px;
    margin: 0 4px 0 2px;
    border: 1px solid #ccc;
}
.split button {
    width: 27px;
}
.split .arrow {
    width: 14px;
    border-left: 1px solid #ccc;
}
.box {
    width: 40px;
    height: 28px;
    border: 1px solid #aaa;
}
.filter-select {
    position: relative;
    width: 177px;
    margin-right: 18px;
}
.filter-select select {
    display: block;
    width: 100%;
    height: 25px;
    padding: 0 7px;
    border: 1px solid #aaa;
    border-radius: 0;
    background: linear-gradient(#ccc, #ccc) right 14px top 0 / 1px 100% no-repeat #f7f9fc;
    appearance: none;
}
.filter-select .caret {
    position: absolute;
    right: 4px;
    top: 11px;
}

/* 水印 */
.watermark {
    position: absolute;
    right: 16px;
    bottom: 4px;
    pointer-events: none;
}
.forum {
    display: flex;
    gap: 4px;
    font: italic 300 39px/44px "Noto Sans CJK SC", sans-serif;
    color: #000;
}
.forum b {
    font-weight: 300;
    color: #ff6838;
}
.site {
    font: italic 15px/16px "DejaVu Sans", sans-serif;
    color: #999;
}
.watermark svg {
    position: absolute;
    left: 66px;
    top: -20px;
}
.grip {
    position: absolute;
    right: 2px;
    bottom: 2px;
}
```
